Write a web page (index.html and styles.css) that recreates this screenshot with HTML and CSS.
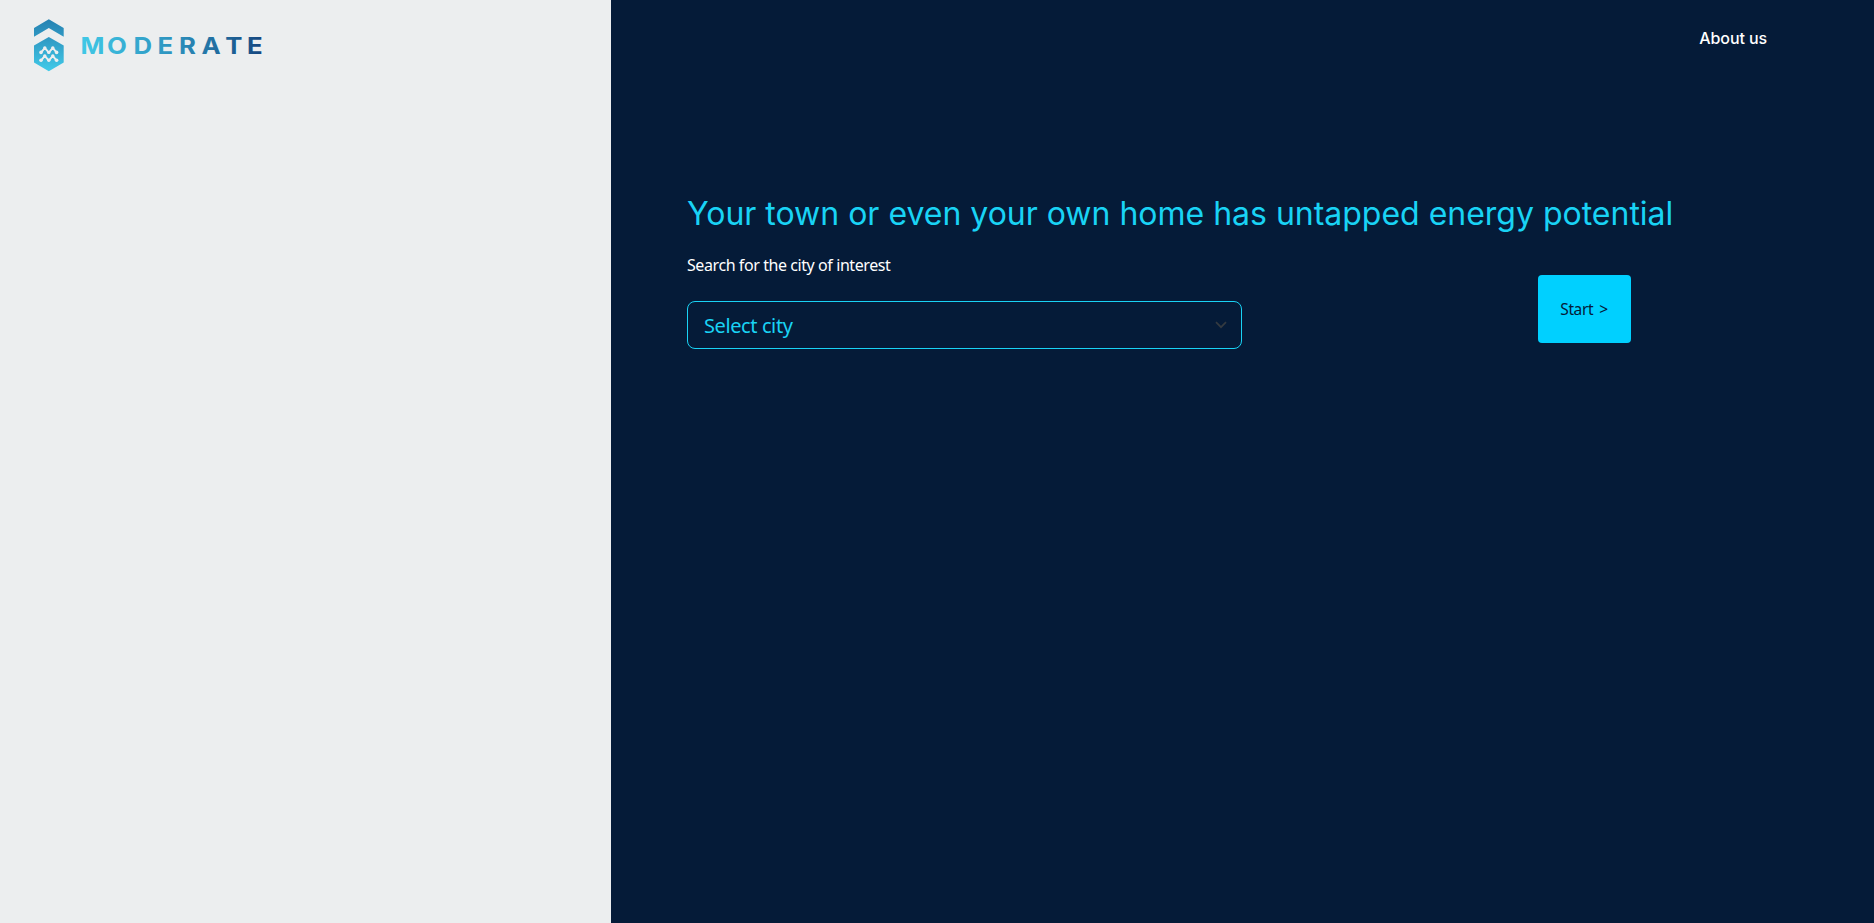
FILE: index.html
```html
<!DOCTYPE html>
<html lang="en">
<head>
<meta charset="utf-8">
<title>Moderate</title>
<link rel="stylesheet" href="styles.css">
</head>
<body>
<div class="page">
  <aside class="sidebar">
    <svg class="logo" width="240" height="60" viewBox="30 14 240 60" role="img" aria-label="Moderate">
      <defs>
        <linearGradient id="word" gradientUnits="userSpaceOnUse" x1="73" y1="0" x2="235" y2="0">
          <stop offset="0" stop-color="#40c8e6"/><stop offset=".5" stop-color="#2d93bf"/><stop offset="1" stop-color="#15467f"/>
        </linearGradient>
        <linearGradient id="roof" x1="0" y1="0" x2="0" y2="1">
          <stop offset="0" stop-color="#2582b2"/><stop offset="1" stop-color="#2f98c3"/>
        </linearGradient>
        <linearGradient id="hex" x1="0" y1="0" x2="0" y2="1">
          <stop offset="0" stop-color="#2f97c2"/><stop offset="1" stop-color="#41cbe9"/>
        </linearGradient>
      </defs>
      <path fill="url(#roof)" d="M34 28 48.8 19.3 63.7 28v8.8L48.8 28 34 36.8z"/>
      <path fill="url(#hex)" d="M34 45.6 48.8 37l14.9 8.6v17L48.8 71.2 34 62.6z"/>
      <g fill="none" stroke="#eceeef" stroke-width="1.9" stroke-linejoin="round" stroke-linecap="round">
        <path d="M41 52.6 44.8 47.8 48.8 52.6 52.8 47.8 56.6 52.6M41 60.6 44.8 55.8 48.8 60.6 52.8 55.8 56.6 60.6"/>
      </g>
      <g fill="#eceeef">
        <circle cx="41" cy="52.4" r="1.8"/><circle cx="44.8" cy="48" r="1.7"/><circle cx="48.8" cy="52.4" r="1.7"/><circle cx="52.8" cy="48" r="1.7"/><circle cx="56.6" cy="52.4" r="1.8"/>
        <circle cx="41" cy="60.3" r="1.8"/><circle cx="44.8" cy="56" r="1.7"/><circle cx="48.8" cy="60.3" r="1.7"/><circle cx="52.8" cy="56" r="1.7"/><circle cx="56.6" cy="60.3" r="1.8"/>
      </g>
      <text class="wordmark" fill="url(#word)" transform="scale(1.12 1)" y="53.8" x="71.8 95.6 119.3 140.7 159.8 179.9 201.1 220.6">MODERATE</text>
    </svg>
  </aside>
  <main class="content">
    <nav class="nav"><a class="nav-link">About us</a></nav>
    <h1 class="title">Your town or even your own home has untapped energy potential</h1>
    <div class="search">
      <div class="field">
        <label class="label">Search for the city of interest</label>
        <div class="select">
          <span class="placeholder">Select city</span>
          <svg class="chevron" width="12" height="8" viewBox="0 0 12 8"><path d="M1 1.2 6 6.2 11 1.2" fill="none" stroke="#343a40" stroke-width="1.7"/></svg>
        </div>
      </div>
      <button class="start">Start &gt;</button>
    </div>
  </main>
</div>
</body>
</html>
```
FILE: styles.css
```css
body { margin: 0; font-family: "Segoe UI", "Noto Sans", sans-serif; }
.page { display: flex; height: 923px; overflow: hidden; }
.sidebar { width: 611px; flex: none; background: #eceeef; box-sizing: border-box; padding: 14px 30px; }
.logo { display: block; }
.wordmark { font-family: Inter, sans-serif; font-weight: 700; font-size: 23px; }
.content { flex: 1; background: #051b38; padding: 0 76px; }
.nav { display: flex; justify-content: flex-end; height: 77px; padding: 0 31px 0 0; box-sizing: border-box; }
.nav-link { font: 500 16px/77px Inter, sans-serif; letter-spacing: -0.1px; color: #fff; }
.title { margin: 117px 0 0; font: 400 32px/39px Inter, sans-serif; letter-spacing: -0.01px; color: #19d3f5; white-space: nowrap; }
.search { display: flex; }
.field { width: 555px; padding-top: 20px; }
.label { display: block; font-size: 16px; letter-spacing: -0.42px; line-height: 25px; color: #fff; white-space: nowrap; }
.select { display: flex; align-items: center; justify-content: space-between; height: 48px; box-sizing: border-box; border: 1px solid #19d3f5; border-radius: 8px; margin-top: 23px; padding: 0 14px 0 16px; }
.placeholder { font-size: 20px; letter-spacing: -0.4px; padding-top: 1px; color: #19d3f5; }
.start { width: 93px; height: 68px; margin: 42px 0 0 296px; padding: 0 1px 0 0; border: 0; border-radius: 4px; background: #00d0ff; color: #051b38; font: 15.5px "Segoe UI", "Noto Sans", sans-serif; letter-spacing: -0.4px; word-spacing: 2.5px; }
```
